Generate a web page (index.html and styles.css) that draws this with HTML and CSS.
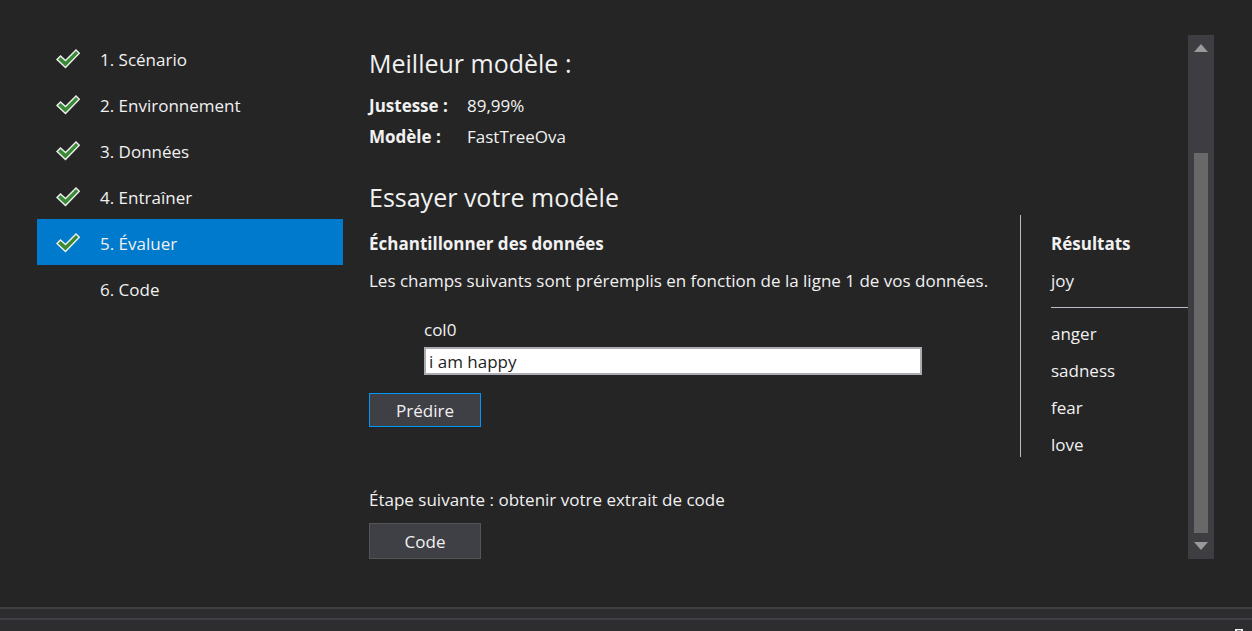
FILE: index.html
```html
<!DOCTYPE html>
<html lang="fr">
<head>
<meta charset="utf-8">
<meta name="viewport" content="width=device-width, initial-scale=1">
<title>Évaluer</title>
<link rel="stylesheet" href="styles.css">
</head>
<body>
<svg class="defs" aria-hidden="true">
  <symbol id="check" viewBox="0 0 24 20">
    <path d="M1 10.500L4.500 7L9.500 11.500L20 1L23.300 4.300L9.500 18.500Z" fill="#388a34" stroke="#f0f0f0" stroke-width="1.400"/>
  </symbol>
</svg>
<div class="wizard">
  <nav class="steps" aria-label="Étapes">
    <a class="step" href="#scenario"><svg class="check"><use href="#check"/></svg><span>1. Scénario</span></a>
    <a class="step" href="#environnement"><svg class="check"><use href="#check"/></svg><span>2. Environnement</span></a>
    <a class="step" href="#donnees"><svg class="check"><use href="#check"/></svg><span>3. Données</span></a>
    <a class="step" href="#entrainer"><svg class="check"><use href="#check"/></svg><span>4. Entraîner</span></a>
    <a class="step current" href="#evaluer" aria-current="step"><svg class="check"><use href="#check"/></svg><span>5. Évaluer</span></a>
    <a class="step" href="#code"><svg class="check"></svg><span>6. Code</span></a>
  </nav>
  <main class="content">
    <h1 class="title">Meilleur modèle :</h1>
    <dl class="facts">
      <dt>Justesse :</dt><dd>89,99%</dd>
      <dt>Modèle :</dt><dd>FastTreeOva</dd>
    </dl>
    <h2 class="title">Essayer votre modèle</h2>
    <div class="try">
      <form class="sample">
        <h3 class="subtitle">Échantillonner des données</h3>
        <p class="hint">Les champs suivants sont préremplis en fonction de la ligne 1 de vos données.</p>
        <div class="field">
          <label for="col0">col0</label>
          <input id="col0" type="text" value="i am happy">
        </div>
        <button class="button primary" type="button">Prédire</button>
      </form>
      <section class="results">
        <h3 class="subtitle">Résultats</h3>
        <p class="best">joy</p>
        <ul class="others">
          <li>anger</li>
          <li>sadness</li>
          <li>fear</li>
          <li>love</li>
        </ul>
      </section>
    </div>
    <p class="next">Étape suivante : obtenir votre extrait de code</p>
    <button class="button next-button" type="button">Code</button>
  </main>
  <div class="scrollbar" aria-hidden="true">
    <svg class="arrow" viewBox="0 0 14 8"><path d="M0 8L7 0L14 8Z"/></svg>
    <div class="track"><div class="thumb"></div></div>
    <svg class="arrow" viewBox="0 0 14 8"><path d="M0 0H14L7 8Z"/></svg>
  </div>
</div>
<div class="splitter"></div>
<footer class="panel">
  <svg class="pin" viewBox="0 0 8 2"><path d="M0 0H8V2H0Z" fill="#f1f1f1"/><path d="M2 1H6V2H2Z" fill="#77777a"/></svg>
</footer>
</body>
</html>
```
FILE: styles.css
```css
* {
  box-sizing: border-box;
}

body {
  margin: 0;
  min-height: 100vh;
  display: flex;
  flex-direction: column;
  background: #252526;
  color: #f1f1f1;
  font: 17px/24px "Open Sans", "Noto Sans", sans-serif;
}

h1, h2, h3, p, dl, dd, ul {
  margin: 0;
  padding: 0;
}

.defs {
  position: absolute;
  width: 0;
  height: 0;
}

.wizard {
  flex: 1;
  display: flex;
  padding: 35px 38px 48px 37px;
}

.steps {
  flex: 0 0 306px;
  margin-right: 26px;
}

.step {
  display: flex;
  align-items: center;
  gap: 20px;
  height: 46px;
  padding: 4px 19px 0;
  color: inherit;
  text-decoration: none;
}

.step.current {
  background: #007acc;
}

.check {
  width: 24px;
  height: 20px;
  margin-bottom: 2px;
}

.content {
  flex: 1;
  min-width: 0;
  padding-top: 10px;
}

.title {
  font-size: 25px;
  line-height: 36px;
  font-weight: 400;
}

.facts {
  display: grid;
  grid-template-columns: 98px 1fr;
  line-height: 31px;
  padding: 9px 0 27px;
}

.facts dt {
  font-weight: 700;
}

.try {
  display: flex;
  justify-content: space-between;
}

.sample {
  flex: 1;
  padding-top: 17px;
}

.subtitle {
  font-size: 17px;
  font-weight: 700;
  margin-bottom: 13px;
}

.field {
  display: flex;
  flex-direction: column;
  gap: 5px;
  margin: 25px 98px 18px 55px;
}

.field input {
  height: 28px;
  padding: 0 3px;
  border: 2px solid #abadb3;
  background: #fff;
  color: #1e1e1e;
  font: inherit;
}

.button {
  width: 112px;
  height: 34px;
  padding: 2px 0 0;
  border: 1px solid #555555;
  background: #3f3f46;
  color: #f1f1f1;
  font: inherit;
}

.button.primary {
  border-color: #0097fb;
}

.results {
  width: 168px;
  padding: 17px 0 0 30px;
  border-left: 1px solid #b8bcc4;
}

.best {
  padding-bottom: 14px;
  border-bottom: 1px solid #b8bcc4;
}

.others {
  display: grid;
  gap: 13px;
  margin-top: 14px;
  list-style: none;
}

.next {
  margin: 31px 0 11px;
}

.next-button {
  height: 36px;
}

.scrollbar {
  flex: 0 0 26px;
  display: flex;
  flex-direction: column;
  align-items: center;
  padding: 9px 0;
  background: #3e3e42;
}

.arrow {
  width: 14px;
  height: 8px;
  fill: #999999;
}

.track {
  flex: 1;
  display: flex;
  align-items: flex-end;
  padding-bottom: 9px;
}

.thumb {
  width: 14px;
  height: 79%;
  background: #686868;
}

.splitter {
  height: 13px;
  border: solid #3f3f46;
  border-width: 2px 0;
  background: #2d2d30;
}

.panel {
  display: flex;
  justify-content: flex-end;
  align-items: flex-end;
  height: 11px;
  padding-right: 9px;
  background: #2d2d30;
}

.pin {
  width: 8px;
  height: 2px;
}
```
